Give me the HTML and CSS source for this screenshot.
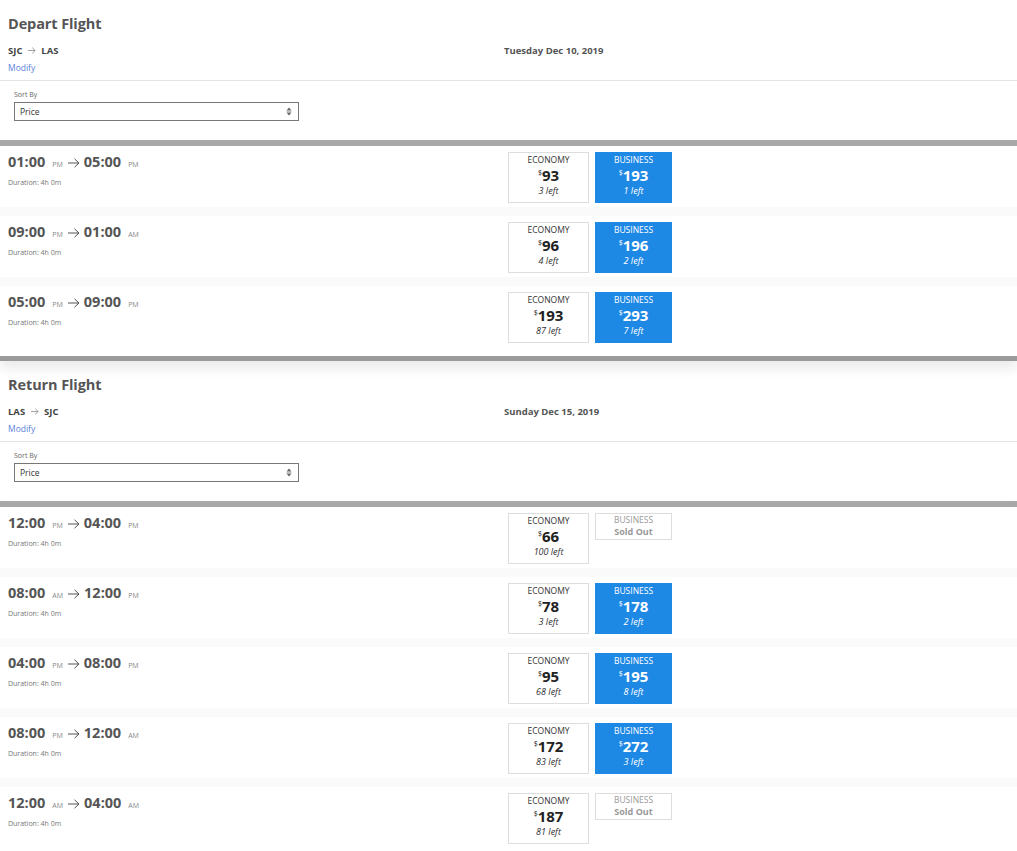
FILE: index.html
```html
<!DOCTYPE html>
<html>
<head>
<meta charset="utf-8">
<link rel="stylesheet" href="styles.css">
</head>
<body>
<section class="leg">
  <h2 class="leg-title">Depart Flight</h2>
  <div class="leg-info">
    <div class="route-col">
      <div class="route">SJC <svg class="route-arrow" width="8" height="7" viewBox="0 0 8 7"><path d="M0 3.5 H7.2 M4.2 0.6 L7.2 3.5 L4.2 6.4" fill="none" stroke="#999" stroke-width="0.9"/></svg> LAS</div>
      <a class="modify">Modify</a>
    </div>
    <div class="date">Tuesday Dec 10, 2019</div>
  </div>
  <div class="divider"></div>
  <div class="sort">
    <div class="sort-label">Sort By</div>
    <div class="select"><span>Price</span><svg width="6" height="9" viewBox="0 0 6 9"><path d="M3 0.5 L5.5 3.5 H0.5 Z M3 8.5 L5.5 5.5 H0.5 Z" fill="#666"/><path d="M0.5 4.5 H5.5" stroke="#999" stroke-width="0.6"/></svg></div>
  </div>
  <ul class="flights">
    <li class="flight">
      <div class="times">
        <div class="time-line"><b>01:00</b><span class="ampm">PM</span><svg class="t-arrow" width="12" height="10" viewBox="0 0 12 10"><path d="M0 5 H11 M6.5 0.8 L11 5 L6.5 9.2" fill="none" stroke="#555" stroke-width="1"/></svg><b>05:00</b><span class="ampm">PM</span></div>
        <div class="duration">Duration: 4h 0m</div>
      </div>
      <div class="fares">
        <div class="fare eco"><div class="cls">ECONOMY</div><div class="price"><sup>$</sup>93</div><div class="left">3 left</div></div>
        <div class="fare biz"><div class="cls">BUSINESS</div><div class="price"><sup>$</sup>193</div><div class="left">1 left</div></div>
      </div>
    </li>
    <li class="flight">
      <div class="times">
        <div class="time-line"><b>09:00</b><span class="ampm">PM</span><svg class="t-arrow" width="12" height="10" viewBox="0 0 12 10"><path d="M0 5 H11 M6.5 0.8 L11 5 L6.5 9.2" fill="none" stroke="#555" stroke-width="1"/></svg><b>01:00</b><span class="ampm">AM</span></div>
        <div class="duration">Duration: 4h 0m</div>
      </div>
      <div class="fares">
        <div class="fare eco"><div class="cls">ECONOMY</div><div class="price"><sup>$</sup>96</div><div class="left">4 left</div></div>
        <div class="fare biz"><div class="cls">BUSINESS</div><div class="price"><sup>$</sup>196</div><div class="left">2 left</div></div>
      </div>
    </li>
    <li class="flight">
      <div class="times">
        <div class="time-line"><b>05:00</b><span class="ampm">PM</span><svg class="t-arrow" width="12" height="10" viewBox="0 0 12 10"><path d="M0 5 H11 M6.5 0.8 L11 5 L6.5 9.2" fill="none" stroke="#555" stroke-width="1"/></svg><b>09:00</b><span class="ampm">PM</span></div>
        <div class="duration">Duration: 4h 0m</div>
      </div>
      <div class="fares">
        <div class="fare eco"><div class="cls">ECONOMY</div><div class="price"><sup>$</sup>193</div><div class="left">87 left</div></div>
        <div class="fare biz"><div class="cls">BUSINESS</div><div class="price"><sup>$</sup>293</div><div class="left">7 left</div></div>
      </div>
    </li>
  </ul>
</section>

<section class="leg">
  <h2 class="leg-title">Return Flight</h2>
  <div class="leg-info">
    <div class="route-col">
      <div class="route">LAS <svg class="route-arrow" width="8" height="7" viewBox="0 0 8 7"><path d="M0 3.5 H7.2 M4.2 0.6 L7.2 3.5 L4.2 6.4" fill="none" stroke="#999" stroke-width="0.9"/></svg> SJC</div>
      <a class="modify">Modify</a>
    </div>
    <div class="date">Sunday Dec 15, 2019</div>
  </div>
  <div class="divider"></div>
  <div class="sort">
    <div class="sort-label">Sort By</div>
    <div class="select"><span>Price</span><svg width="6" height="9" viewBox="0 0 6 9"><path d="M3 0.5 L5.5 3.5 H0.5 Z M3 8.5 L5.5 5.5 H0.5 Z" fill="#666"/><path d="M0.5 4.5 H5.5" stroke="#999" stroke-width="0.6"/></svg></div>
  </div>
  <ul class="flights">
    <li class="flight">
      <div class="times">
        <div class="time-line"><b>12:00</b><span class="ampm">PM</span><svg class="t-arrow" width="12" height="10" viewBox="0 0 12 10"><path d="M0 5 H11 M6.5 0.8 L11 5 L6.5 9.2" fill="none" stroke="#555" stroke-width="1"/></svg><b>04:00</b><span class="ampm">PM</span></div>
        <div class="duration">Duration: 4h 0m</div>
      </div>
      <div class="fares">
        <div class="fare eco"><div class="cls">ECONOMY</div><div class="price"><sup>$</sup>66</div><div class="left">100 left</div></div>
        <div class="fare sold"><div class="cls">BUSINESS</div><div class="sold-text">Sold Out</div></div>
      </div>
    </li>
    <li class="flight">
      <div class="times">
        <div class="time-line"><b>08:00</b><span class="ampm">AM</span><svg class="t-arrow" width="12" height="10" viewBox="0 0 12 10"><path d="M0 5 H11 M6.5 0.8 L11 5 L6.5 9.2" fill="none" stroke="#555" stroke-width="1"/></svg><b>12:00</b><span class="ampm">PM</span></div>
        <div class="duration">Duration: 4h 0m</div>
      </div>
      <div class="fares">
        <div class="fare eco"><div class="cls">ECONOMY</div><div class="price"><sup>$</sup>78</div><div class="left">3 left</div></div>
        <div class="fare biz"><div class="cls">BUSINESS</div><div class="price"><sup>$</sup>178</div><div class="left">2 left</div></div>
      </div>
    </li>
    <li class="flight">
      <div class="times">
        <div class="time-line"><b>04:00</b><span class="ampm">PM</span><svg class="t-arrow" width="12" height="10" viewBox="0 0 12 10"><path d="M0 5 H11 M6.5 0.8 L11 5 L6.5 9.2" fill="none" stroke="#555" stroke-width="1"/></svg><b>08:00</b><span class="ampm">PM</span></div>
        <div class="duration">Duration: 4h 0m</div>
      </div>
      <div class="fares">
        <div class="fare eco"><div class="cls">ECONOMY</div><div class="price"><sup>$</sup>95</div><div class="left">68 left</div></div>
        <div class="fare biz"><div class="cls">BUSINESS</div><div class="price"><sup>$</sup>195</div><div class="left">8 left</div></div>
      </div>
    </li>
    <li class="flight">
      <div class="times">
        <div class="time-line"><b>08:00</b><span class="ampm">PM</span><svg class="t-arrow" width="12" height="10" viewBox="0 0 12 10"><path d="M0 5 H11 M6.5 0.8 L11 5 L6.5 9.2" fill="none" stroke="#555" stroke-width="1"/></svg><b>12:00</b><span class="ampm">AM</span></div>
        <div class="duration">Duration: 4h 0m</div>
      </div>
      <div class="fares">
        <div class="fare eco"><div class="cls">ECONOMY</div><div class="price"><sup>$</sup>172</div><div class="left">83 left</div></div>
        <div class="fare biz"><div class="cls">BUSINESS</div><div class="price"><sup>$</sup>272</div><div class="left">3 left</div></div>
      </div>
    </li>
    <li class="flight">
      <div class="times">
        <div class="time-line"><b>12:00</b><span class="ampm">AM</span><svg class="t-arrow" width="12" height="10" viewBox="0 0 12 10"><path d="M0 5 H11 M6.5 0.8 L11 5 L6.5 9.2" fill="none" stroke="#555" stroke-width="1"/></svg><b>04:00</b><span class="ampm">AM</span></div>
        <div class="duration">Duration: 4h 0m</div>
      </div>
      <div class="fares">
        <div class="fare eco"><div class="cls">ECONOMY</div><div class="price"><sup>$</sup>187</div><div class="left">81 left</div></div>
        <div class="fare sold"><div class="cls">BUSINESS</div><div class="sold-text">Sold Out</div></div>
      </div>
    </li>
  </ul>
</section>
</body>
</html>
```

FILE: styles.css
```css
* { box-sizing: border-box; }
html, body { margin: 0; padding: 0; background: #fff; }
body {
  font-family: "Open Sans", "Noto Sans", "Liberation Sans", sans-serif;
  color: #444;
  width: 1017px;
  overflow: hidden;
}
.leg-title {
  margin: 0;
  padding: 14px 8px 0;
  font-size: 14.5px;
  line-height: 20px;
  font-weight: 700;
  color: #555;
  letter-spacing: -0.1px;
}
.leg-info {
  display: flex;
  padding: 10px 8px 0;
}
.route-col { width: 496px; }
.route {
  font-size: 9.5px;
  line-height: 14px;
  font-weight: 700;
  color: #444;
}
.route-arrow { margin: 0 3px; vertical-align: 0; }
.modify {
  display: block;
  margin-top: 3px;
  font-size: 8.5px;
  line-height: 14px;
  color: #5b7fd6;
  cursor: pointer;
}
.date {
  font-size: 9.5px;
  line-height: 14px;
  font-weight: 700;
  color: #555;
}
.divider {
  margin-top: 5px;
  height: 1px;
  background: #e3e3e3;
}
.sort { padding: 9px 14px 0; }
.sort-label {
  font-size: 7px;
  line-height: 10px;
  color: #666;
}
.select {
  margin-top: 2px;
  width: 285px;
  height: 19px;
  border: 1px solid #777;
  display: flex;
  align-items: center;
  justify-content: space-between;
  padding: 0 6px 0 5px;
  font-size: 8.5px;
  color: #333;
}
.flights {
  position: relative;
  z-index: 1;
  list-style: none;
  margin: 19px 0 0;
  padding: 0;
  border-top: 6px solid #a8a8a8;
  border-bottom: 5px solid #9a9a9a;
  box-shadow: 0 7px 12px rgba(0, 0, 0, 0.09);
  background: #fff;
}
.flight {
  display: flex;
  height: 70px;
  padding: 6px 8px 0;
  background: linear-gradient(#fff 0, #fff 61px, #fafafa 61px, #fafafa 100%);
}
.flight:last-child { background: #fff; }
.times { width: 500px; }
.time-line {
  font-size: 14.5px;
  line-height: 20px;
  color: #555;
  white-space: nowrap;
}
.time-line b { font-weight: 700; color: #555; }
.ampm {
  font-size: 7px;
  color: #888;
  margin: 0 5px 0 7px;
}
.t-arrow { margin-right: 4px; vertical-align: -1px; }
.duration {
  margin-top: 3px;
  font-size: 7px;
  line-height: 10px;
  color: #777;
}
.fares {
  display: flex;
  align-items: flex-start;
  gap: 6px;
}
.fare {
  text-align: center;
  height: 51px;
  padding-top: 1px;
}
.eco { width: 81px; border: 1px solid #ddd; color: #333; }
.biz { width: 77px; background: #1e88e5; color: #fff; padding-top: 2px; }
.sold { width: 77px; height: 27px; border: 1px solid #ddd; color: #999; padding-top: 0; }
.cls {
  font-size: 8.5px;
  line-height: 11px;
  font-weight: 400;
}
.price {
  font-size: 15px;
  line-height: 20px;
  font-weight: 700;
}
.eco .price { color: #222; }
.price sup {
  font-size: 7px;
  line-height: 0;
  font-weight: 400;
  vertical-align: 0;
  position: relative;
  top: -6px;
  margin-right: 0;
}
.left {
  font-size: 9px;
  line-height: 11px;
  font-style: italic;
}
.sold-text {
  font-size: 9px;
  line-height: 13px;
  font-weight: 700;
  color: #999;
}
```
